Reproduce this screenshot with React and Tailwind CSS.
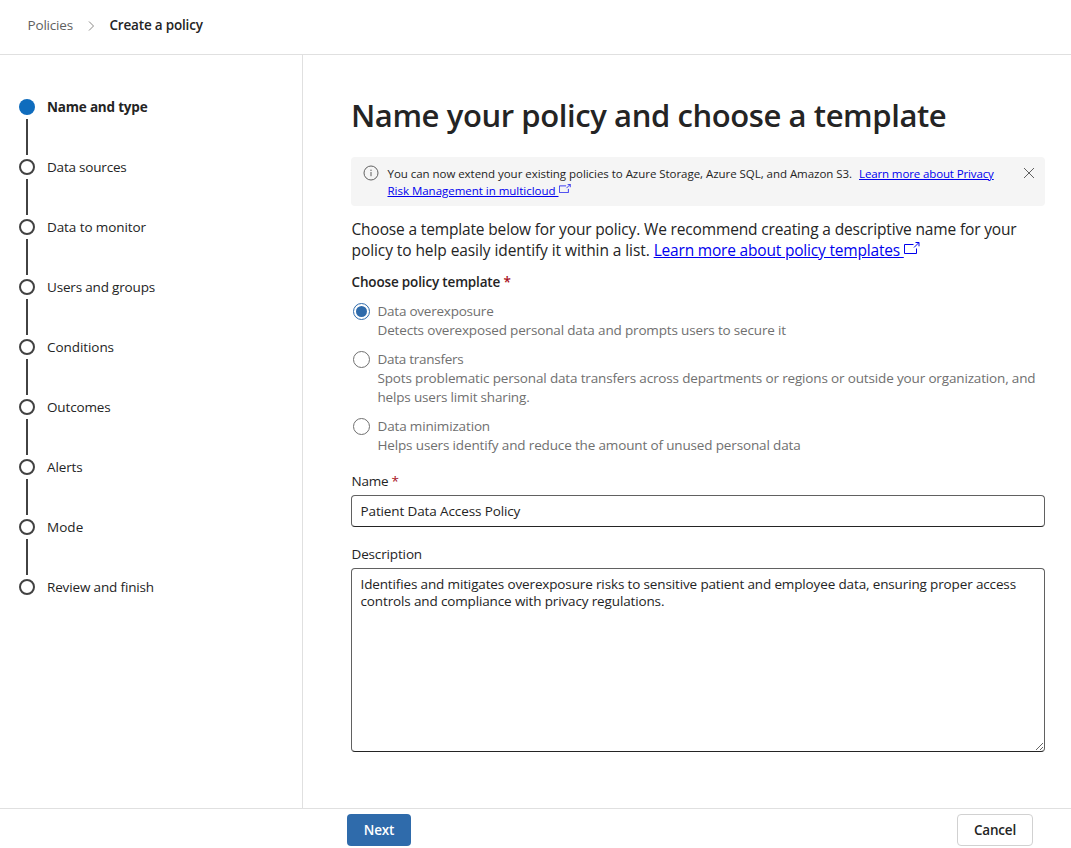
const steps = [
  { label: 'Name and type', track: 'tracking-[-0.194px]', active: true },
  { label: 'Data sources', track: 'tracking-[-0.204px]' },
  { label: 'Data to monitor', track: 'tracking-[-0.089px]' },
  { label: 'Users and groups', track: 'tracking-[-0.176px]' },
  { label: 'Conditions', track: 'tracking-[-0.064px]' },
  { label: 'Outcomes', track: 'tracking-[-0.15px]' },
  { label: 'Alerts', track: 'tracking-[-0.133px]' },
  { label: 'Mode', track: 'tracking-[0.05px]' },
  { label: 'Review and finish', track: 'tracking-[-0.148px]' },
];

const templates = [
  {
    title: 'Data overexposure',
    track: 'tracking-[-0.231px]',
    selected: true,
    lines: [
      { text: 'Detects overexposed personal data and prompts users to secure it', track: 'tracking-[-0.159px]' },
    ],
  },
  {
    title: 'Data transfers',
    track: 'tracking-[-0.267px]',
    lines: [
      {
        text: 'Spots problematic personal data transfers across departments or regions or outside your organization, and',
        track: 'tracking-[-0.152px]',
      },
      { text: 'helps users limit sharing.', track: 'tracking-[-0.175px]' },
    ],
  },
  {
    title: 'Data minimization',
    track: 'tracking-[-0.152px]',
    lines: [
      { text: 'Helps users identify and reduce the amount of unused personal data', track: 'tracking-[-0.149px]' },
    ],
  },
];

function Header() {
  return (
    <header className="flex h-[55px] items-center border-b border-[#e0e0e0] pb-[3px] pl-[27.5px]">
      <span className="tracking-[-0.182px] text-[#616161]">Policies</span>
      <svg className="ml-[15px] mr-[14.5px]" width="7" height="10" viewBox="0 0 7 10" fill="none" stroke="#8a8886">
        <path d="M1 0.5 5.5 5 1 9.5" />
      </svg>
      <span className="font-semibold tracking-[-0.19px]">Create a policy</span>
    </header>
  );
}

function Stepper() {
  return (
    <nav className="w-[303px] shrink-0 border-r border-[#e0e0e0] pl-[19px] pt-[44px]">
      {steps.map((step, i) => (
        <div key={step.label} className="flex h-[60px] gap-3">
          <div className="flex w-4 flex-col items-center">
            <span
              className={
                step.active
                  ? 'size-4 shrink-0 rounded-full bg-[#0f6cbd]'
                  : 'size-4 shrink-0 rounded-full border-2 border-[#424242]'
              }
            />
            {i < steps.length - 1 && <span className="mt-1 h-9 w-0.5 bg-[#424242]" />}
          </div>
          <span className={`${step.track} ${step.active ? 'font-bold' : ''} h-4 whitespace-nowrap leading-4`}>
            {step.label}
          </span>
        </div>
      ))}
    </nav>
  );
}

function ExternalIcon({ className }) {
  return (
    <svg className={className} viewBox="0 0 16 12" fill="none" stroke="#0000ee">
      <path d="M9.5 2.5H.5v9h12V6.5M10 5.5 14.8.7M11.5.5h3.5v3.8" />
    </svg>
  );
}

function Banner() {
  return (
    <div className="mt-[23px] flex h-[49px] rounded bg-[#f5f5f5] pl-3 pt-2 text-[11.5px] leading-[17px]">
      <svg className="shrink-0" width="16" height="16" viewBox="0 0 16 16" fill="none" stroke="#616161">
        <circle cx="8" cy="8" r="7" />
        <path d="M8 7v4.2" />
        <circle cx="8" cy="5.2" r=".7" fill="#616161" stroke="none" />
      </svg>
      <div className="ml-[8.5px] whitespace-nowrap">
        <div className="flex">
          <span className="tracking-[-0.041px]">
            You can now extend your existing policies to Azure Storage, Azure SQL, and Amazon S3.
          </span>
          <a className="ml-[7px] tracking-[-0.125px] text-[#0000ee] underline">Learn more about Privacy</a>
        </div>
        <div className="flex">
          <a className="whitespace-pre tracking-[-0.02px] text-[#0000ee] underline">
            {'Risk Management in multicloud '}
          </a>
          <ExternalIcon className="mt-0.5 h-[9px] w-3" />
        </div>
      </div>
      <svg className="ml-auto mr-[10px] mt-[2px]" width="12" height="12" viewBox="0 0 12 12" fill="none" stroke="#616161">
        <path d="M1 1 11 11M11 1 1 11" />
      </svg>
    </div>
  );
}

function TemplateOption({ option }) {
  return (
    <div className="flex text-[#707070]">
      <span
        className={
          option.selected
            ? 'ml-[2px] mt-[1px] flex size-[17px] shrink-0 items-center justify-center rounded-full border border-[#2f6bab]'
            : 'ml-[2px] mt-[1px] size-[17px] shrink-0 rounded-full border border-[#707070]'
        }
      >
        {option.selected && <span className="size-[11px] rounded-full bg-[#2f6bab]" />}
      </span>
      <div className="ml-[7.5px] whitespace-nowrap leading-[19px]">
        <div className={option.track}>{option.title}</div>
        {option.lines.map((line) => (
          <div key={line.text} className={line.track}>
            {line.text}
          </div>
        ))}
      </div>
    </div>
  );
}

export default function App() {
  return (
    <div className="flex h-[848px] w-[1071px] flex-col overflow-hidden bg-white font-['Open_Sans',sans-serif] text-[13.5px] text-[#242424]">
      <Header />
      <div className="flex h-[753px]">
        <Stepper />
        <main className="w-[742px] pl-12 pt-[40px]">
          <h1 className="h-[39px] whitespace-nowrap text-[31px] font-semibold leading-[40px] tracking-[-0.405px]">
            Name your policy and choose a template
          </h1>
          <Banner />
          <div className="mt-[13px] whitespace-nowrap pl-[0.5px] text-[15.5px] leading-[21px]">
            <div className="tracking-[-0.153px]">
              Choose a template below for your policy. We recommend creating a descriptive name for your
            </div>
            <div className="flex">
              <span className="whitespace-pre tracking-[-0.08px]">{'policy to help easily identify it within a list. '}</span>
              <a className="whitespace-pre tracking-[-0.19px] text-[#0000ee] underline">
                {'Learn more about policy templates '}
              </a>
              <ExternalIcon className="mt-[2px] h-3 w-4" />
            </div>
          </div>
          <div className="mt-[11px] pl-[0.5px] font-semibold leading-5 tracking-[-0.16px]">
            Choose policy template <span className="text-[#a80f22]">*</span>
          </div>
          <div className="mt-[10px] flex flex-col gap-[10px]">
            {templates.map((t) => (
              <TemplateOption key={t.title} option={t} />
            ))}
          </div>
          <div className="mt-4 pl-[0.5px] leading-5 tracking-[-0.25px]">
            Name <span className="text-[#a80f22]">*</span>
          </div>
          <input
            className="mt-1 block h-8 w-full rounded border border-[#616161] border-b-[#242424] pl-[8.5px] tracking-[-0.12px]"
            defaultValue="Patient Data Access Policy"
          />
          <div className="mt-[17px] pl-[0.5px] leading-5 tracking-[-0.145px]">Description</div>
          <textarea
            className="mt-1 block h-[184px] w-full rounded border border-[#616161] border-b-[#242424] px-[8.5px] pt-[7px] leading-[17px] tracking-[-0.138px]"
            defaultValue="Identifies and mitigates overexposure risks to sensitive patient and employee data, ensuring proper access controls and compliance with privacy regulations."
          />
        </main>
      </div>
      <footer className="flex h-10 justify-between border-t border-[#e0e0e0] pl-[347px] pr-[38px] pt-[5px]">
        <button className="h-8 w-16 rounded bg-[#2f6bab] font-semibold tracking-[-0.16px] text-white">Next</button>
        <button className="h-8 w-[76px] rounded border border-[#d1d1d1] font-semibold tracking-[-0.203px]">Cancel</button>
      </footer>
    </div>
  );
}
